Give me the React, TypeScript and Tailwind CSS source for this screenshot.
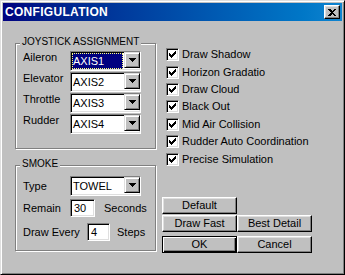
import type { ReactNode } from 'react'

// Bordes 3D estilo Windows clásico.
const raised =
  'border border-t-white border-l-white border-r-black border-b-black shadow-[inset_-1px_-1px_0_#808080,inset_1px_1px_0_#dfdfdf]'
const sunken =
  'border border-t-[#808080] border-l-[#808080] border-r-white border-b-white shadow-[inset_1px_1px_0_#000,inset_-1px_-1px_0_#dfdfdf]'

function GroupBox({ title, className, children }: { title: string; className: string; children: ReactNode }) {
  return (
    <div className={`relative border border-[#808080] shadow-[1px_1px_0_#fff,inset_1px_1px_0_#fff] ${className}`}>
      <span className="absolute -top-[8px] left-[4px] bg-[#c0c0c0] px-[2px] text-[10px] leading-[12px]">
        {title}
      </span>
      {children}
    </div>
  )
}

function DropButton() {
  return (
    <div className="flex h-[16px] w-[16px] items-center justify-center border border-t-[#dfdfdf] border-l-[#dfdfdf] border-r-black border-b-black bg-[#c0c0c0] shadow-[inset_1px_1px_0_#fff,inset_-1px_-1px_0_#808080]">
      <svg width="7" height="4" viewBox="0 0 7 4" shapeRendering="crispEdges">
        <polygon points="0,0 7,0 3.5,4" fill="#000" />
      </svg>
    </div>
  )
}

function Combo({ value, selected = false }: { value: string; selected?: boolean }) {
  return (
    <div className={`flex h-[20px] w-[71px] items-stretch bg-white ${sunken}`}>
      <div className="flex min-w-0 flex-1 p-[1px]">
        <span
          className={`flex flex-1 items-center pl-[1px] text-[11px] leading-[13px] ${
            selected ? 'bg-[#000080] text-white outline outline-1 outline-dotted outline-[#ffff80] -outline-offset-1' : ''
          }`}
        >
          {value}
        </span>
      </div>
      <DropButton />
    </div>
  )
}

function CheckItem({ label }: { label: string }) {
  return (
    <div className="flex h-[17.4px] items-center gap-[3px]">
      <div className={`flex h-[13px] w-[13px] items-center justify-center bg-white ${sunken}`}>
        <svg width="7" height="7" viewBox="0 0 7 7" shapeRendering="crispEdges">
          <path d="M0 2 L2 4 L7 -1 L7 2 L2 7 L0 5 Z" fill="#000" />
        </svg>
      </div>
      <span className="text-[11px] leading-[13px]">{label}</span>
    </div>
  )
}

function Button({ label, isDefault = false }: { label: string; isDefault?: boolean }) {
  const cls = isDefault
    ? 'border border-black shadow-[inset_1px_1px_0_#fff,inset_-1px_-1px_0_#000,inset_-2px_-2px_0_#808080]'
    : raised
  return (
    <button
      type="button"
      className={`flex h-[17px] w-[75px] items-center justify-center bg-[#c0c0c0] text-[11px] leading-[13px] ${cls}`}
    >
      {label}
    </button>
  )
}

const axes = [
  ['Aileron', 'AXIS1'],
  ['Elevator', 'AXIS2'],
  ['Throttle', 'AXIS3'],
  ['Rudder', 'AXIS4'],
]

const options = [
  'Draw Shadow',
  'Horizon Gradatio',
  'Draw Cloud',
  'Black Out',
  'Mid Air Collision',
  'Rudder Auto Coordination',
  'Precise Simulation',
]

export default function App() {
  return (
    <div className="h-[275px] w-[345px] border border-t-[#dfdfdf] border-l-[#dfdfdf] border-r-black border-b-black bg-[#c0c0c0] p-[2px] font-['Liberation_Sans',Arial,sans-serif] text-black shadow-[inset_1px_1px_0_#fff,inset_-1px_-1px_0_#808080]">
      {/* Barra de título */}
      <div className="flex h-[18px] items-center justify-between bg-gradient-to-r from-[#000080] to-[#1084d0] pl-[2px] pr-[2px]">
        <span className="text-[12px] font-bold leading-[14px] tracking-[0.3px] text-white">CONFIGULATION</span>
        <div className={`flex h-[14px] w-[16px] items-center justify-center bg-[#c0c0c0] ${raised}`}>
          <svg width="8" height="7" viewBox="0 0 8 7" shapeRendering="crispEdges">
            <path d="M0 0 H2 L4 2 L6 0 H8 L5 3.5 L8 7 H6 L4 5 L2 7 H0 L3 3.5 Z" fill="#000" />
          </svg>
        </div>
      </div>

      <div className="flex pl-[12px] pt-[22px]">
        {/* Columna izquierda */}
        <div className="flex w-[141px] flex-col gap-[16px]">
          <GroupBox title="JOYSTICK ASSIGNMENT" className="h-[106px] pl-[7px] pt-[7px]">
            <div className="flex flex-col gap-[1px]">
              {axes.map(([label, value], i) => (
                <div key={label} className="flex items-start">
                  <span className="w-[47px] text-[11px] leading-[13px]">{label}</span>
                  <Combo value={value} selected={i === 0} />
                </div>
              ))}
            </div>
          </GroupBox>

          <GroupBox title="SMOKE" className="h-[86px] pl-[7px] pt-[10px]">
            <div className="flex items-center">
              <span className="w-[47px] text-[11px] leading-[13px]">Type</span>
              <Combo value="TOWEL" />
            </div>
            <div className="mt-[3px] flex items-center">
              <span className="w-[47px] text-[11px] leading-[13px]">Remain</span>
              <div className={`flex h-[18px] w-[25px] items-center bg-white pl-[3px] text-[11px] ${sunken}`}>30</div>
              <span className="ml-[9px] text-[11px] leading-[13px]">Seconds</span>
            </div>
            <div className="mt-[6px] flex items-center">
              <span className="w-[64px] text-[11px] leading-[13px]">Draw Every</span>
              <div className={`flex h-[18px] w-[23px] items-center bg-white pl-[3px] text-[11px] ${sunken}`}>4</div>
              <span className="ml-[7px] text-[11px] leading-[13px]">Steps</span>
            </div>
          </GroupBox>
        </div>

        {/* Columna derecha */}
        <div className="ml-[6px] flex flex-col pt-[3px]">
          <div className="flex flex-col pl-[4px]">
            {options.map((o) => (
              <CheckItem key={o} label={o} />
            ))}
          </div>
          <div className="mt-[29px] flex flex-col">
            <Button label="Default" />
            <div className="mt-[1px] flex">
              <Button label="Draw Fast" />
              <Button label="Best Detail" />
            </div>
            <div className="mt-[4px] flex">
              <Button label="OK" isDefault />
              <Button label="Cancel" />
            </div>
          </div>
        </div>
      </div>
    </div>
  )
}
